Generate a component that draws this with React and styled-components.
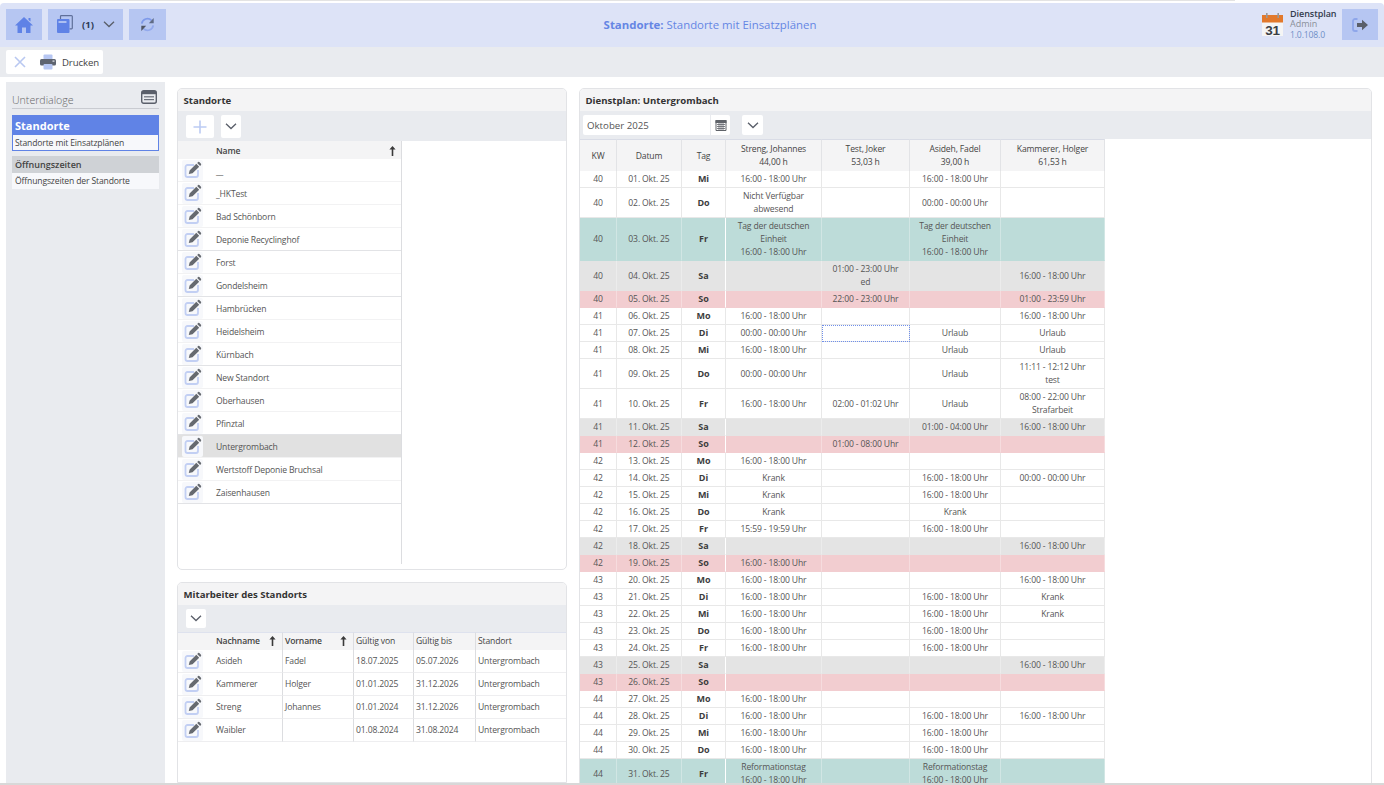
import React from 'react';
import styled, { createGlobalStyle } from 'styled-components';

const Global = createGlobalStyle`
  html, body { margin: 0; padding: 0; height: 100%; background: #fff; overflow: hidden; }
  body { font-family: "Open Sans", "Noto Sans", sans-serif; font-size: 8.6px; letter-spacing: -0.15px; color: #555; }
  * { box-sizing: border-box; }
`;

const Page = styled.div`
  width: 1384px; height: 785px; overflow: hidden; display: flex; flex-direction: column;
  border-bottom: 2px solid #d8d8d8; background: #fff;
`;
const TopEdge = styled.div`
  flex: 0 0 1px; margin: 0 149px 0 90px; background: #e3e3e3;
`;
const Header = styled.header`
  flex: 0 0 44px; margin-top: 2px; background: #dde3f7; display: flex; align-items: center; padding: 0 6px 1px; gap: 6px;
  border-radius: 4px 4px 0 0;
`;
const HeadButton = styled.div`
  height: 31px; width: ${p => p.$w}px; background: #b6c6f2; display: flex; align-items: center;
  justify-content: center; gap: 9px;
`;
const Count = styled.span`font-weight: 700; color: #2d3a55; font-size: 9.5px; letter-spacing: 0;`;
const Title = styled.div`
  flex: 1; text-align: center; font-size: 11.4px; letter-spacing: 0; color: #6586e4; padding-right: 8px;
  b { font-weight: 700; }
`;
const AppInfo = styled.div`display: flex; align-items: center; gap: 7px;`;
const AppText = styled.div`line-height: 10px; color: #7a8aa5; width: 46px; white-space: nowrap;`;
const AppName = styled.div`font-weight: 600; color: #333c4d; font-size: 9px; letter-spacing: -0.05px;`;
const AppRole = styled.div`color: #8a8f99; font-size: 9px; letter-spacing: 0;`;
const AppVer = styled.div`color: #6f8fc7; padding-top: 1px;`;

const ToolBar = styled.div`
  flex: 0 0 30px; background: #e9ebef; padding: 3px 6px; display: flex;
`;
const ToolGroup = styled.div`
  width: 97px; height: 24px; background: #fff; display: flex; align-items: center; padding-left: 8px; gap: 14px; font-size: 9.6px; color: #444; letter-spacing: -0.1px;
  border-radius: 2px;
`;
const PrintWrap = styled.div`display: flex; align-items: center; gap: 6px;`;

const Body = styled.div`
  flex: 1; min-height: 0; display: flex; padding: 5px 12px 0 6px; gap: 12px;
`;
const Side = styled.aside`
  flex: 0 0 159px; background: #e9ebef; padding: 6px 6px 0;
`;
const SideHead = styled.div`
  display: flex; align-items: flex-start; justify-content: space-between; height: 21px; padding: 2px 2px 0 0;
  border-bottom: 1px solid #c9cbd1; font-size: 10.6px; font-weight: 300; letter-spacing: 0; color: #666; margin-bottom: 6px;
`;
const SideLabel = styled.span`padding-top: 3px;`;
const SideCard = styled.div`margin-bottom: 5px; background: #f7f8fb; border: ${p => p.$active ? '1px solid #6083e6' : 'none'};`;
const SideTitle = styled.div`
  height: ${p => p.$active ? 19 : 17}px; background: ${p => p.$active ? '#6083e6' : '#cfd2d6'}; color: ${p => p.$active ? '#fff' : '#444'};
  font-weight: ${p => p.$active ? 700 : 600}; font-size: ${p => p.$active ? 11 : 9}px; letter-spacing: 0; display: flex; align-items: center; padding-left: ${p => p.$active ? 2 : 3}px;
`;
const SideSub = styled.div`height: ${p => p.$active ? 15 : 16}px; display: flex; align-items: center; padding-left: ${p => p.$active ? 2 : 3}px; color: #444; white-space: nowrap;`;

const Middle = styled.div`
  flex: 0 0 390px; margin-top: 6px; display: flex; flex-direction: column; gap: 12px; min-height: 0;
`;
const Panel = styled.section`
  flex: ${p => p.$h ? `0 0 ${p.$h}px` : '1'}; min-height: 0; overflow: hidden; border: 1px solid #e2e3e6; border-radius: 5px 5px ${p => p.$h ? 5 : 0}px ${p => p.$h ? 5 : 0}px; background: #fff;
  display: flex; flex-direction: column;
`;
const Right = styled(Panel)`flex: 0 0 793px; margin-top: 6px; height: 800px; border-radius: 5px 5px 0 0;`;
const PanelHead = styled.div`
  flex: 0 0 22px; background: #f4f4f5; display: flex; align-items: center; padding-left: 5.5px;
  font-weight: 700; font-size: 9.6px; letter-spacing: 0; color: #333;
`;
const PanelTools = styled.div`
  flex: 0 0 ${p => p.$h}px; background: #e9ebef; display: flex; align-items: flex-start; gap: ${p => p.$gap || 7}px; padding: 4px 0 0 ${p => p.$left ?? 8}px;
`;
const IconBtn = styled.div`
  width: ${p => p.$w}px; height: ${p => p.$h || 23}px; background: #fff; border-radius: 2px; display: flex; align-items: center; justify-content: center;
`;
const MonthInput = styled.div`
  width: 147px; height: 20px; background: #fff; display: flex; align-items: center; font-size: 9.7px; letter-spacing: 0; color: #555;
  padding-left: 4px; justify-content: space-between; border-radius: 2px;
`;
const CalSlot = styled.span`width: 20px; height: 20px; border-left: 1px solid #e9ebef; display: flex; align-items: center; justify-content: center;`;

const ListArea = styled.div`display: flex; flex: 1; min-height: 0;`;
const ListCol = styled.div`
  flex: 0 0 224px; border-right: 1px solid #dcdde0; margin-bottom: 5px; overflow: hidden;
`;
const ListHead = styled.div`
  height: 18px; background: #f4f4f5; display: flex; align-items: center; padding: 1px 5px 0 38px; justify-content: space-between;
  font-weight: 600; color: #444;
`;
const ListRow = styled.div`
  height: 23px; display: flex; align-items: center; padding-left: 4px; gap: 13px; border-bottom: 1px solid ${p => p.$strong ? '#e2e3e6' : '#f2f2f3'};
  background: ${p => p.$sel ? '#e1e1e1' : '#fff'}; color: #555;
`;
const RowText = styled.span`padding-top: 1px;`;
const EditBox = styled.span`
  width: 21px; height: 21px; display: flex; align-items: center; justify-content: center; flex: none; background: #f7f8fb; border-radius: 2px;
`;

const EmpGrid = styled.div`
  display: grid; grid-template-columns: 105px 71px 60px 62px 1fr; color: #555;
`;
const EmpHeadCell = styled.div`
  height: 18px; background: #f4f4f5; display: flex; align-items: center; justify-content: space-between; color: #444; padding-bottom: 2px;
  padding-left: ${p => p.$first ? 38 : 2}px; padding-right: 6px; border-top: 1px solid #dee2ee; border-right: ${p => p.$last ? 'none' : '1px solid #dcdde0'};
  font-weight: ${p => p.$bold ? 600 : 400};
`;
const EmpCell = styled.div`
  height: 23px; display: flex; align-items: center; border-bottom: 1px solid #eeeef0;
  padding-left: ${p => p.$first ? 4 : 2}px; gap: 13px; border-right: ${p => p.$last ? 'none' : '1px solid #dcdde0'};
`;

const Plan = styled.table`
  border-collapse: separate; border-spacing: 0; width: 525px; table-layout: fixed; color: #555;
`;
const Th = styled.th`
  background: #f4f4f5; font-weight: 400; color: #444; line-height: 13px; padding: 3px 1px 2px; height: 32px; text-align: center;
  border-right: 1px solid #e2e3e6; border-top: 1px solid #d9dce6;
`;
const Td = styled.td`
  background: ${p => p.$bg}; line-height: 13px; padding: ${p => p.$bold ? '1px 1px 2px' : '2px 1px 1px'}; text-align: center; border-bottom: 1px solid ${p => p.$bg === '#fff' ? '#e8e8e8' : 'transparent'};
  border-right: 1px solid ${p => p.$bg === '#fff' ? '#e8e8e8' : p.$tag ? '#fff' : 'rgba(255,255,255,.3)'};
  font-weight: ${p => p.$bold ? 700 : 400}; color: ${p => p.$bold ? '#3d3d3d' : '#555'};
  font-size: ${p => p.$bold ? '9px' : 'inherit'}; letter-spacing: ${p => p.$bold ? 0 : 'inherit'};
  ${p => p.$focus && 'outline: 1px dotted #6f8fea; outline-offset: -1px;'}
`;

const B = '#5f82e6', D = '#5a5f6a';

const Home = () => <svg width="20" height="18" viewBox="0 0 20 18"><path d="M10 1 L19 9.5 H16.5 V17 H12 V11.5 H8 V17 H3.5 V9.5 H1 Z M14.5 2 H16.5 V5.5 L14.5 4 Z" fill={B}/></svg>;
const Pages = () => <svg width="17" height="19" viewBox="0 0 17 19"><path d="M4.5 4 V1.5 A.8 .8 0 0 1 5.3 .7 H15.5 A.8 .8 0 0 1 16.3 1.5 V13 A.8 .8 0 0 1 15.5 13.8 H13.5" fill="none" stroke="#5f6f9a" strokeWidth="1.2"/><rect x="1" y="4" width="12.5" height="14" rx="1" fill={B}/><rect x="2.5" y="6.3" width="8" height="1.4" fill="#cfdaf7"/></svg>;
const Refresh = () => <svg width="15" height="15" viewBox="0 0 17 17" fill="none"><path d="M2 7.5 A6.5 6.5 0 0 1 13 3.8" stroke="#7f9aea" strokeWidth="2"/><path d="M15.5 1 V7 H10 Z" fill="#5f6b86"/><path d="M15 9.5 A6.5 6.5 0 0 1 4 13.2" stroke="#92a9ec" strokeWidth="2"/><path d="M1.5 16 V10 H7 Z" fill="#4f5563"/></svg>;
const Chevron = ({ c = '#5a5f6a', s = 12 }) => <svg width={s} height={s * 0.7} viewBox="0 0 12 8" fill="none"><path d="M1 1.5 L6 6.3 L11 1.5" stroke={c} strokeWidth="1.3"/></svg>;
const SignOut = () => <svg width="17" height="14" viewBox="0 0 17 14" fill="none"><path d="M5.5 1 H3 A2 2 0 0 0 1 3 V11 A2 2 0 0 0 3 13 H5.5" stroke="#8ea6ea" strokeWidth="1.8"/><path d="M5 5 H10 V1.8 L16 7 L10 12.2 V9 H5 Z" fill={D}/></svg>;
const Times = () => <svg width="12" height="12" viewBox="0 0 12 12" fill="none"><path d="M1 1 L11 11 M11 1 L1 11" stroke="#b9c8f1" strokeWidth="1.6"/></svg>;
const Printer = () => <svg width="16" height="16" viewBox="0 0 16 16"><rect x="3.5" y="0.5" width="9" height="5" rx="1" fill="#b6c6f2"/><rect x="0" y="5" width="16" height="6.5" rx="1.5" fill="#5e6470"/><rect x="3.5" y="10" width="9" height="5.5" rx="1" fill="#b6c6f2"/><rect x="12.5" y="6.5" width="2" height="1.2" fill="#e5e7ee"/></svg>;
const Plus = () => <svg width="14" height="14" viewBox="0 0 14 14" fill="none"><path d="M7 0.5 V13.5 M0.5 7 H13.5" stroke="#bccbf3" strokeWidth="1.6"/></svg>;
const Up = () => <svg width="7" height="10" viewBox="0 0 7 10"><path d="M3.5 0 L6.6 3.6 H4.3 V10 H2.7 V3.6 H0.4 Z" fill="#3a3a3a"/></svg>;
const Edit = () => <svg width="18" height="18" viewBox="0 0 18 18" fill="none"><path d="M10 4 H3.5 A2 2 0 0 0 1.5 6 V14 A2 2 0 0 0 3.5 16 H12 A2 2 0 0 0 14 14 V9" stroke="#c2cff3" strokeWidth="1.8"/><path d="M4.8 13 L5.6 9.4 L12.3 2.8 L15.2 5.7 L8.5 12.3 Z M13.2 1.9 L14.1 1 Q14.7 .6 15.3 1.1 L17 2.8 Q17.4 3.4 17 4 L16.1 4.9 Z" fill="#666a70"/></svg>;
const Win = () => <svg width="16" height="14" viewBox="0 0 16 14"><rect x="0.7" y="0.7" width="14.6" height="12.6" rx="2" fill="#e9ebef" stroke="#5a5f6a" strokeWidth="1.4"/><rect x="1" y="1" width="14" height="3.2" fill="#5a5f6a"/><rect x="3" y="6.2" width="10" height="1.2" fill="#6b707a"/><rect x="3" y="9" width="10" height="1.2" fill="#6b707a"/></svg>;
const Cal = () => <svg width="12" height="12" viewBox="0 0 12 12"><path d="M1 1.5 H11 V11.5 H1 Z" fill="#fff" stroke="#5f6369"/><rect x="0.5" y="1" width="11" height="3" fill="#5f6369"/><path d="M2 5.5 H10 M2 7.5 H10 M2 9.5 H10 M4 4 V11 M6 4 V11 M8 4 V11" stroke="#5f6369" strokeWidth=".8"/></svg>;
const CalLogo = () => (
  <svg width="21" height="23" viewBox="0 0 21 23">
    <rect x="0" y="2" width="21" height="21" fill="#f5f5f5"/>
    <rect x="0" y="2" width="21" height="7.5" fill="#e2792c"/>
    <rect x="4" y="0" width="1.6" height="5" fill="#999"/><rect x="15.4" y="0" width="1.6" height="5" fill="#999"/>
    <text x="10.5" y="21.5" textAnchor="middle" fontFamily="Liberation Sans, sans-serif" fontWeight="700" fontSize="13.5" fill="#3a3f46">31</text>
  </svg>
);

const sites = [['__'],['_HKTest'],['Bad Schönborn'],['Deponie Recyclinghof',1],['Forst'],['Gondelsheim',1],['Hambrücken'],['Heidelsheim'],['Kürnbach',1],['New Standort'],['Oberhausen'],['Pfinztal',1],['Untergrombach'],['Wertstoff Deponie Bruchsal'],['Zaisenhausen',1]];
const emps = [['Asideh','Fadel','18.07.2025','05.07.2026','Untergrombach'],['Kammerer','Holger','01.01.2025','31.12.2026','Untergrombach'],['Streng','Johannes','01.01.2024','31.12.2026','Untergrombach'],['Waibler','','01.08.2024','31.08.2024','Untergrombach']];

const T = '16:00 - 18:00 Uhr';
const days = [
 [40,'01','Mi',[T],[],[T],[]],
 [40,'02','Do',['Nicht Verfügbar','abwesend'],[],['00:00 - 00:00 Uhr'],[]],
 [40,'03','Fr',['Tag der deutschen','Einheit',T],[],['Tag der deutschen','Einheit',T],[]],
 [40,'04','Sa',[],['01:00 - 23:00 Uhr','ed'],[],[T]],
 [40,'05','So',[],['22:00 - 23:00 Uhr'],[],['01:00 - 23:59 Uhr']],
 [41,'06','Mo',[T],[],[],[T]],
 [41,'07','Di',['00:00 - 00:00 Uhr'],[],['Urlaub'],['Urlaub']],
 [41,'08','Mi',[T],[],['Urlaub'],['Urlaub']],
 [41,'09','Do',['00:00 - 00:00 Uhr'],[],['Urlaub'],['11:11 - 12:12 Uhr','test']],
 [41,'10','Fr',[T],['02:00 - 01:02 Uhr'],['Urlaub'],['08:00 - 22:00 Uhr','Strafarbeit']],
 [41,'11','Sa',[],[],['01:00 - 04:00 Uhr'],[T]],
 [41,'12','So',[],['01:00 - 08:00 Uhr'],[],[]],
 [42,'13','Mo',[T],[],[],[]],
 [42,'14','Di',['Krank'],[],[T],['00:00 - 00:00 Uhr']],
 [42,'15','Mi',['Krank'],[],[T],[]],
 [42,'16','Do',['Krank'],[],['Krank'],[]],
 [42,'17','Fr',['15:59 - 19:59 Uhr'],[],[T],[]],
 [42,'18','Sa',[],[],[],[T]],
 [42,'19','So',[T],[],[],[]],
 [43,'20','Mo',[T],[],[],[T]],
 [43,'21','Di',[T],[],[T],['Krank']],
 [43,'22','Mi',[T],[],[T],['Krank']],
 [43,'23','Do',[T],[],[T],[]],
 [43,'24','Fr',[T],[],[T],[]],
 [43,'25','Sa',[],[],[],[T]],
 [43,'26','So',[],[],[],[]],
 [44,'27','Mo',[T],[],[],[]],
 [44,'28','Di',[T],[],[T],[T]],
 [44,'29','Mi',[T],[],[T],[]],
 [44,'30','Do',[T],[],[T],[]],
 [44,'31','Fr',['Reformationstag',T],[],['Reformationstag',T],[]],
];
const rowBg = (d) => d[1] === '03' || d[1] === '31' ? '#bddcd9' : d[2] === 'Sa' ? '#e4e4e4' : d[2] === 'So' ? '#f2cdd0' : '#fff';
const Lines = ({ l }) => l.map((x, i) => <React.Fragment key={i}>{i > 0 && <br />}{x}</React.Fragment>);

export default function App() {
  return (
    <Page>
      <Global />
      <TopEdge />
      <Header>
        <HeadButton $w={36}><Home /></HeadButton>
        <HeadButton $w={75}><Pages /><Count>(1)</Count><Chevron /></HeadButton>
        <HeadButton $w={37}><Refresh /></HeadButton>
        <Title><b>Standorte:</b> Standorte mit Einsatzplänen</Title>
        <AppInfo>
          <CalLogo />
          <AppText><AppName>Dienstplan</AppName><AppRole>Admin</AppRole><AppVer>1.0.108.0</AppVer></AppText>
        </AppInfo>
        <HeadButton $w={36}><SignOut /></HeadButton>
      </Header>
      <ToolBar>
        <ToolGroup><Times /><PrintWrap><Printer />Drucken</PrintWrap></ToolGroup>
      </ToolBar>
      <Body>
        <Side>
          <SideHead><SideLabel>Unterdialoge</SideLabel><Win /></SideHead>
          <SideCard $active><SideTitle $active>Standorte</SideTitle><SideSub $active>Standorte mit Einsatzplänen</SideSub></SideCard>
          <SideCard><SideTitle>Öffnungszeiten</SideTitle><SideSub>Öffnungszeiten der Standorte</SideSub></SideCard>
        </Side>
        <Middle>
          <Panel $h={482}>
            <PanelHead>Standorte</PanelHead>
            <PanelTools $h={30}><IconBtn $w={28}><Plus /></IconBtn><IconBtn $w={20}><Chevron /></IconBtn></PanelTools>
            <ListArea>
              <ListCol>
                <ListHead>Name<Up /></ListHead>
                {sites.map(([n, s], i) => <ListRow key={i} $strong={s} $sel={n === 'Untergrombach'}><EditBox><Edit /></EditBox><RowText>{n}</RowText></ListRow>)}
              </ListCol>
            </ListArea>
          </Panel>
          <Panel>
            <PanelHead>Mitarbeiter des Standorts</PanelHead>
            <PanelTools $h={27}><IconBtn $w={20} $h={19}><Chevron /></IconBtn></PanelTools>
            <EmpGrid>
              <EmpHeadCell $first $bold>Nachname<Up /></EmpHeadCell>
              <EmpHeadCell $bold>Vorname<Up /></EmpHeadCell>
              <EmpHeadCell>Gültig von</EmpHeadCell>
              <EmpHeadCell>Gültig bis</EmpHeadCell>
              <EmpHeadCell $last>Standort</EmpHeadCell>
              {emps.map((e, i) => (
                <React.Fragment key={i}>
                  <EmpCell $first><EditBox><Edit /></EditBox>{e[0]}</EmpCell>
                  <EmpCell>{e[1]}</EmpCell><EmpCell>{e[2]}</EmpCell><EmpCell>{e[3]}</EmpCell><EmpCell $last>{e[4]}</EmpCell>
                </React.Fragment>
              ))}
            </EmpGrid>
          </Panel>
        </Middle>
        <Right>
          <PanelHead>Dienstplan: Untergrombach</PanelHead>
          <PanelTools $h={28} $left={3} $gap={12}>
            <MonthInput>Oktober 2025<CalSlot><Cal /></CalSlot></MonthInput>
            <IconBtn $w={21} $h={20}><Chevron /></IconBtn>
          </PanelTools>
          <Plan>
            <colgroup>
              {[37, 65, 44, 96, 88, 91, 104].map((w, i) => <col key={i} width={w} />)}
            </colgroup>
            <thead>
              <tr>
                <Th>KW</Th><Th>Datum</Th><Th>Tag</Th>
                <Th>Streng, Johannes<br />44,00 h</Th><Th>Test, Joker<br />53,03 h</Th><Th>Asideh, Fadel<br />39,00 h</Th><Th>Kammerer, Holger<br />61,53 h</Th>
              </tr>
            </thead>
            <tbody>
              {days.map((d) => {
                const bg = rowBg(d);
                return (
                  <tr key={d[1]}>
                    <Td $bg={bg}>{d[0]}</Td>
                    <Td $bg={bg}>{d[1]}. Okt. 25</Td>
                    <Td $bg={bg} $bold $tag>{d[2]}</Td>
                    <Td $bg={bg}><Lines l={d[3]} /></Td>
                    <Td $bg={bg} $focus={d[1] === '07'}><Lines l={d[4]} /></Td>
                    <Td $bg={bg}><Lines l={d[5]} /></Td>
                    <Td $bg={bg}><Lines l={d[6]} /></Td>
                  </tr>
                );
              })}
            </tbody>
          </Plan>
        </Right>
      </Body>
    </Page>
  );
}
